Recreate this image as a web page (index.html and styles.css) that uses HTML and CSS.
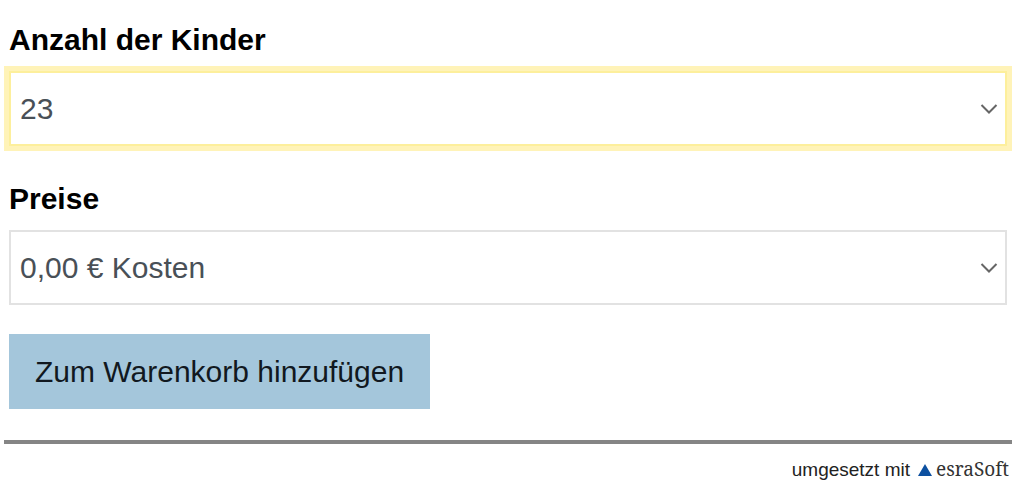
FILE: index.html
```html
<!DOCTYPE html>
<html lang="de">

<head>
    <meta charset="UTF-8">
    <meta name="viewport" content="width=device-width, initial-scale=1.0">
    <title>Anmeldung</title>
    <link rel="stylesheet" href="styles.css">
</head>

<body>
    <form class="booking-form">
        <div class="form-group">
            <label for="kinder">Anzahl der Kinder</label>
            <div class="select-box">
                <select id="kinder" class="active">
                    <option selected>23</option>
                </select>
                <svg class="arrow" viewBox="0 0 18 12" aria-hidden="true">
                    <path d="M1.5 2l7.5 7.5L16.500 2" />
                </svg>
            </div>
        </div>
        <div class="form-group">
            <label for="preise">Preise</label>
            <div class="select-box">
                <select id="preise">
                    <option selected>0,00 € Kosten</option>
                </select>
                <svg class="arrow" viewBox="0 0 18 12" aria-hidden="true">
                    <path d="M1.5 2l7.5 7.5L16.500 2" />
                </svg>
            </div>
        </div>
        <button type="button">Zum Warenkorb hinzufügen</button>
    </form>

    <footer>
        <span>umgesetzt mit</span>
        <a href="#" class="brand">
            <svg class="logo" viewBox="0 0 14 12" aria-hidden="true">
                <path d="M7 0l7 12H0z" />
            </svg>
            <span>esraSoft</span>
        </a>
    </footer>
</body>

</html>
```

FILE: styles.css
```css
body {
    font-family: "Liberation Sans", Arial, sans-serif;
    background-color: #fff;
    color: #000;
    margin: 0;
    padding: 22px 12px 0 4px;
}

.booking-form {
    padding: 0 5px;
}

.form-group {
    display: flex;
    flex-direction: column;
    gap: 13px;
    margin-bottom: 35px;
}

.form-group:last-of-type {
    margin-bottom: 29px;
}

.form-group label {
    font-size: 30px;
    line-height: 36px;
    font-weight: bold;
}

.select-box {
    position: relative;
}

.select-box select {
    display: block;
    appearance: none;
    width: 100%;
    height: 75px;
    padding: 0 40px 0 9px;
    box-sizing: border-box;
    border: 2px solid #e2e2e2;
    border-radius: 0;
    background-color: #fff;
    color: #495057;
    font-family: inherit;
    font-size: 30px;
}

.select-box select.active {
    border-color: #fdef9c;
    box-shadow: 0 0 0 5px #fff3b8;
}

.arrow {
    position: absolute;
    top: 32px;
    right: 9px;
    width: 18px;
    height: 12px;
    fill: none;
    stroke: #666;
    stroke-width: 2;
    pointer-events: none;
}

button {
    display: block;
    height: 75px;
    padding: 0 26px;
    border: none;
    background-color: #a4c6db;
    color: #111820;
    font-family: inherit;
    font-size: 30px;
    cursor: pointer;
}

footer {
    display: flex;
    justify-content: flex-end;
    align-items: baseline;
    gap: 8px;
    margin-top: 31px;
    padding: 13px 3px 0 0;
    border-top: 4px solid #858585;
    font-size: 19px;
    line-height: 24px;
    color: #222;
}

.brand {
    display: flex;
    align-items: baseline;
    gap: 4px;
    color: #333;
    font-family: "Noto Serif", "Liberation Serif", serif;
    text-decoration: none;
}

.logo {
    width: 14px;
    height: 12px;
    fill: #0c50a0;
}
```
